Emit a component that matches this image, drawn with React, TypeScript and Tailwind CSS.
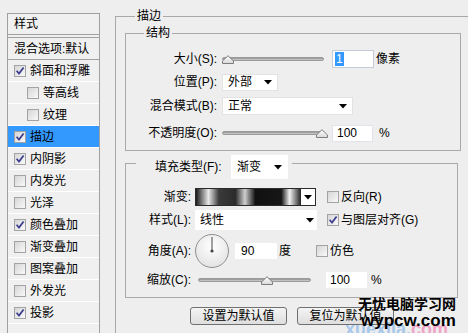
import React from "react";

function Check({ checked }: { checked?: boolean }) {
  return (
    <span className="w-[12px] h-[12px] border border-[#a3a3a3] bg-[linear-gradient(135deg,#d6d6d6,#f9f9f9)] flex items-center justify-center shrink-0">
      {checked && (
        <svg width="10" height="10" viewBox="0 0 10 10">
          <path d="M1.6 4.8 L4 7.6 L8.6 1.4" fill="none" stroke="#3d3d8f" strokeWidth="1.7" />
        </svg>
      )}
    </span>
  );
}

function Arrow() {
  return (
    <svg width="8" height="5" viewBox="0 0 8 5" className="shrink-0">
      <path d="M0 0 H8 L4 4.5 Z" fill="#000" />
    </svg>
  );
}

function Thumb() {
  return (
    <svg width="12" height="9" viewBox="0 0 12 9">
      <defs>
        <linearGradient id="tg" x1="0" y1="0" x2="0" y2="1">
          <stop offset="0" stopColor="#ffffff" />
          <stop offset="1" stopColor="#d8d8d8" />
        </linearGradient>
      </defs>
      <path d="M0.5 8.5 L0.5 6 L6 0.7 L11.5 6 L11.5 8.5 Z" fill="url(#tg)" stroke="#7d7d7d" strokeWidth="1" />
    </svg>
  );
}

const items: { t: string; c?: boolean; sub?: boolean; sel?: boolean }[] = [
  { t: "斜面和浮雕", c: true },
  { t: "等高线", sub: true },
  { t: "纹理", sub: true },
  { t: "描边", c: true, sel: true },
  { t: "内阴影", c: true },
  { t: "内发光" },
  { t: "光泽" },
  { t: "颜色叠加", c: true },
  { t: "渐变叠加" },
  { t: "图案叠加" },
  { t: "外发光" },
  { t: "投影", c: true },
];

export default function App() {
  return (
    <div className="relative w-[468px] h-[333px] overflow-hidden bg-[#eeeeee] flex text-[12px] leading-[16px] text-black font-['Liberation_Sans','Noto_Sans_CJK_SC',sans-serif]">
      {/* Left style list */}
      <div className="mt-[13px] ml-[7px] w-[93px] h-[330px] border border-[#a0a0a0] bg-[#f0f0f0] flex flex-col shrink-0">
        <div className="h-[21px] border-b border-[#a0a0a0] pl-[6px] flex items-center">样式</div>
        <div className="mt-[2px] h-[23px] border-y border-[#a0a0a0] pl-[6px] flex items-center whitespace-nowrap">混合选项:默认</div>
        {items.map((it) => (
          <div
            key={it.t}
            className={`h-[22px] border-b border-white flex items-center gap-[4px] ${it.sub ? "pl-[19px]" : "pl-[6px]"} ${it.sel ? "bg-[#3399ff]" : ""}`}
          >
            <Check checked={it.c} />
            <span>{it.t}</span>
          </div>
        ))}
      </div>

      {/* Main 描边 group */}
      <div className="ml-[15px] mt-[16px] w-[370px] h-[330px] border border-[#a9a9a9] shrink-0 flex flex-col">
        <div className="-mt-[9px] ml-[19px] px-[2px] bg-[#eeeeee] self-start h-[16px] leading-[16px]">描边</div>

        {/* 结构 */}
        <div className="mt-[9px] ml-[9px] w-[336px] h-[118px] border border-[#a9a9a9] flex flex-col shrink-0">
          <div className="-mt-[9px] ml-[18px] px-[2px] bg-[#eeeeee] self-start h-[16px]">结构</div>

          <div className="mt-[8px] h-[20px] flex items-center">
            <div className="w-[91px] text-right whitespace-nowrap">大小(S):</div>
            <div className="ml-[5px] relative w-[102px] h-[20px] flex items-center">
              <div className="w-full h-[4px] rounded-full border border-[#9a9a9a] bg-[linear-gradient(#8e8e8e,#d4d4d4)]" />
              <div className="absolute left-[0px] top-[6px]"><Thumb /></div>
            </div>
            <div className="ml-[8px] w-[42px] h-[18px] bg-white border border-[#c3ccd8] flex items-center pl-[2px]">
              <span className="bg-[#3399ff] text-white px-[1px] leading-[14px]">1</span>
            </div>
            <div className="ml-[2px]">像素</div>
          </div>

          <div className="mt-[3px] h-[20px] flex items-center">
            <div className="w-[91px] text-right whitespace-nowrap">位置(P):</div>
            <div className="ml-[5px] w-[56px] h-[17px] bg-white border border-[#e2e2e2] flex items-center justify-between pl-[5px] pr-[5px]">
              <span>外部</span>
              <Arrow />
            </div>
          </div>

          <div className="mt-[4px] h-[20px] flex items-center">
            <div className="w-[91px] text-right whitespace-nowrap">混合模式(B):</div>
            <div className="ml-[5px] w-[131px] h-[18px] bg-white border border-[#e2e2e2] flex items-center justify-between pl-[5px] pr-[5px]">
              <span>正常</span>
              <Arrow />
            </div>
          </div>

          <div className="mt-[7px] h-[20px] flex items-center">
            <div className="w-[91px] text-right whitespace-nowrap">不透明度(O):</div>
            <div className="ml-[5px] relative w-[102px] h-[20px] flex items-center">
              <div className="w-full h-[4px] rounded-full border border-[#9a9a9a] bg-[linear-gradient(#8e8e8e,#d4d4d4)]" />
              <div className="absolute left-[94px] top-[6px]"><Thumb /></div>
            </div>
            <div className="ml-[8px] w-[41px] h-[17px] bg-white border border-[#e0e4ea] flex items-center pl-[4px]">100</div>
            <div className="ml-[6px]">%</div>
          </div>
        </div>

        {/* 填充类型 */}
        <div className="mt-[12px] ml-[9px] w-[333px] h-[135px] border border-[#a9a9a9] flex flex-col shrink-0">
          <div className="-mt-[9px] ml-[10px] self-start h-[24px] bg-[#eeeeee] flex items-center pl-[19px] pr-[4px]">
            <div className="w-[76px] whitespace-nowrap">填充类型(F):</div>
            <div className="w-[57px] h-[24px] bg-white flex items-center justify-between pl-[6px] pr-[6px]">
              <span>渐变</span>
              <Arrow />
            </div>
          </div>

          <div className="mt-[9px] h-[18px] flex items-center">
            <div className="w-[65px] text-right">渐变:</div>
            <div className="ml-[4px] w-[121px] h-[18px] border border-[#2a2a2a] flex">
              <div className="flex-1 bg-[linear-gradient(90deg,#1a1a1a_0%,#e8e8e8_12%,#3a3a3a_22%,#2c2c2c_38%,#cfcfcf_47%,#111111_57%,#161616_82%,#f0f0f0_90%,#333333_100%)]" />
              <div className="w-[15px] border-l border-[#2a2a2a] bg-white flex items-center justify-center"><Arrow /></div>
            </div>
            <div className="ml-[11px]"><Check /></div>
            <div className="ml-[2px] whitespace-nowrap">反向(R)</div>
          </div>

          <div className="mt-[4px] h-[20px] flex items-center">
            <div className="w-[65px] text-right whitespace-nowrap">样式(L):</div>
            <div className="ml-[4px] w-[122px] h-[20px] bg-white flex items-center justify-between pl-[5px] pr-[3px]">
              <span>线性</span>
              <Arrow />
            </div>
            <div className="ml-[10px]"><Check checked /></div>
            <div className="ml-[2px] whitespace-nowrap">与图层对齐(G)</div>
          </div>

          <div className="mt-[4px] h-[34px] flex items-center">
            <div className="w-[65px] text-right whitespace-nowrap">角度(A):</div>
            <div className="ml-[4px] w-[34px] h-[34px] rounded-full border border-[#8f8f8f] bg-[radial-gradient(circle_at_50%_35%,#ffffff,#dcdcdc)] relative">
              <svg width="32" height="32" viewBox="0 0 32 32" className="absolute left-0 top-0">
                <line x1="16" y1="16" x2="16" y2="2" stroke="#444" strokeWidth="1" />
                <circle cx="16" cy="16" r="1.6" fill="#444" />
              </svg>
            </div>
            <div className="ml-[6px] w-[42px] h-[16px] bg-white flex items-center pl-[6px]">90</div>
            <div className="ml-[2px]">度</div>
            <div className="ml-[25px]"><Check /></div>
            <div className="ml-[2px]">仿色</div>
          </div>

          <div className="mt-[2px] h-[20px] flex items-center">
            <div className="w-[65px] text-right whitespace-nowrap">缩放(C):</div>
            <div className="ml-[7px] relative w-[113px] h-[20px] flex items-center">
              <div className="w-full h-[4px] rounded-full border border-[#9a9a9a] bg-[linear-gradient(#8e8e8e,#d4d4d4)]" />
              <div className="absolute left-[63px] top-[6px]"><Thumb /></div>
            </div>
            <div className="ml-[15px] w-[41px] h-[16px] bg-white flex items-center pl-[4px]">100</div>
            <div className="ml-[4px]">%</div>
          </div>
        </div>

        <div className="mt-[9px] flex">
          <div className="ml-[74px] w-[97px] h-[18px] rounded-[3px] border border-[#707070] bg-[linear-gradient(#f4f4f4,#dedede)] flex items-center justify-center">设置为默认值</div>
          <div className="ml-[10px] w-[97px] h-[18px] rounded-[3px] border border-[#707070] bg-[linear-gradient(#f4f4f4,#dedede)] flex items-center justify-center">复位为默认值</div>
        </div>
      </div>

      {/* watermark */}
      <div className="absolute left-[345px] top-[319px] text-[18px] leading-[20px] font-bold font-['Liberation_Sans',sans-serif] whitespace-nowrap">
        <span className="text-[#a9c9ea]">xuexila.</span>
        <span className="text-[#f2a3c8]">com</span>
      </div>
      <div className="absolute left-[358px] top-[295px] flex flex-col items-start">
        <div className="text-[14px] leading-[17px] font-bold font-['Noto_Sans_CJK_SC',sans-serif] whitespace-nowrap">无忧电脑学习网</div>
        <div className="ml-[3px] text-[17px] leading-[18px] font-bold font-['Liberation_Sans',sans-serif] whitespace-nowrap">wypcw.com</div>
      </div>
    </div>
  );
}
